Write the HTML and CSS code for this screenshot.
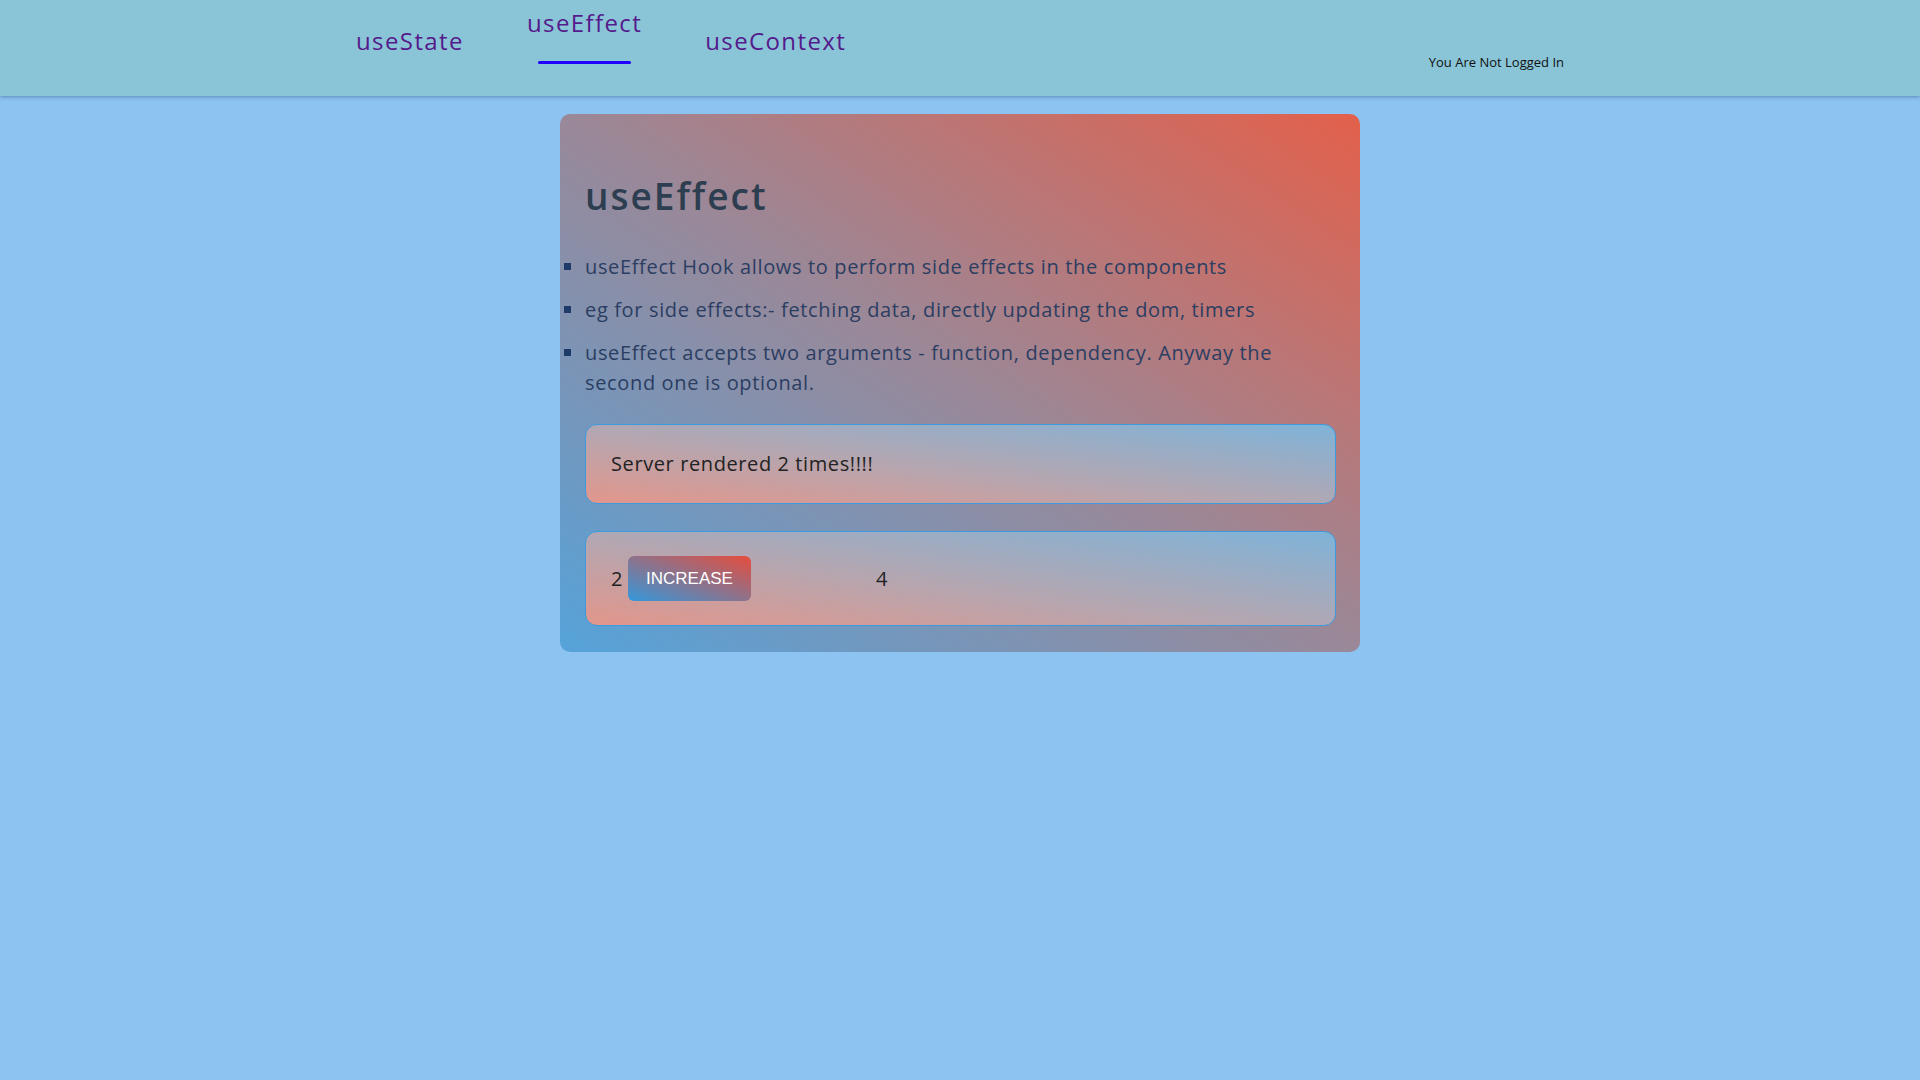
FILE: index.html
```html
<!DOCTYPE html>
<html lang="en">
<head>
<meta charset="utf-8">
<title>useEffect</title>
<link rel="stylesheet" href="styles.css">
</head>
<body>
<header class="topbar">
  <div class="topbar-inner">
    <nav class="nav">
      <a class="nav-link" href="#">useState</a>
      <a class="nav-link active" href="#">useEffect</a>
      <a class="nav-link" href="#">useContext</a>
    </nav>
    <p class="auth">You Are Not Logged In</p>
  </div>
</header>
<main class="page">
  <section class="card">
    <h1 class="card-title">useEffect</h1>
    <ul class="notes">
      <li>useEffect Hook allows to perform side effects in the components</li>
      <li>eg for side effects:- fetching data, directly updating the dom, timers</li>
      <li>useEffect accepts two arguments - function, dependency. Anyway the second one is optional.</li>
    </ul>
    <div class="panel">Server rendered 2 times!!!!</div>
    <div class="panel counter">
      <span class="count">2</span>
      <button class="btn" type="button">INCREASE</button>
      <span class="other">4</span>
    </div>
  </section>
</main>
</body>
</html>
```
FILE: styles.css
```css
* { box-sizing: border-box; }

body {
  margin: 0;
  min-height: 1080px;
  background: #8cc3f1;
  font-family: "Open Sans", "Noto Sans", sans-serif;
}

.topbar {
  height: 96px;
  background: #89c5d7;
  box-shadow: 0 1px 4px rgba(40, 60, 110, 0.45);
  position: relative;
  z-index: 1;
}

.topbar-inner {
  width: 1208px;
  margin: 0 auto;
  display: flex;
  justify-content: space-between;
  align-items: flex-start;
}

.nav {
  display: flex;
  align-items: flex-start;
  gap: 63px;
}

.nav-link {
  display: block;
  margin-top: 29px;
  font-size: 24px;
  line-height: 24px;
  color: #551a8b;
  text-decoration: none;
  letter-spacing: 1.4px;
}

.nav-link.active {
  display: flex;
  flex-direction: column;
  align-items: center;
  margin-top: 11px;
}

.nav-link.active::after {
  content: "";
  width: 80%;
  height: 3px;
  margin-top: 26px;
  background: #2200ff;
  border-radius: 2px;
}

.auth {
  margin: 56px 0 0;
  font-size: 13px;
  line-height: 13px;
  font-weight: 500;
  color: #111;
}

.page {
  padding-top: 18px;
}

.card {
  width: 800px;
  margin: 0 auto;
  padding: 63px 24px 26px 25px;
  border-radius: 10px;
  background: linear-gradient(to top right, #55a3da 0%, #9a8898 50%, #e3604b 100%);
}

.card-title {
  margin: 0;
  font-size: 37px;
  line-height: 37px;
  font-weight: 600;
  letter-spacing: 2px;
  color: #2c3e50;
}

.notes {
  margin: 38px 0 26px;
  padding: 0;
  list-style: square outside;
  font-size: 20px;
  line-height: 30px;
  letter-spacing: 0.65px;
  color: #2b3e62;
}

.notes li::marker {
  color: #1d3a68;
}

.notes li + li {
  margin-top: 13px;
}

.panel {
  border: 1px solid #3d9ade;
  border-radius: 12px;
  padding: 24px 25px;
  font-size: 20px;
  line-height: 30px;
  letter-spacing: 0.6px;
  color: #222;
  background: linear-gradient(to top right, #e2968b 0%, #b5a6b0 45%, #7fb3d8 100%);
}

.counter {
  margin-top: 27px;
  display: flex;
  align-items: center;
}

.count {
  margin-right: 5px;
}

.btn {
  height: 45px;
  padding: 0 18px;
  border: none;
  border-radius: 6px;
  font-family: "Liberation Sans", Arial, sans-serif;
  font-size: 17px;
  letter-spacing: 0;
  color: #fff;
  background: linear-gradient(to top right, #3498db, #e74c3c);
}

.other {
  margin-left: 125px;
}
```
